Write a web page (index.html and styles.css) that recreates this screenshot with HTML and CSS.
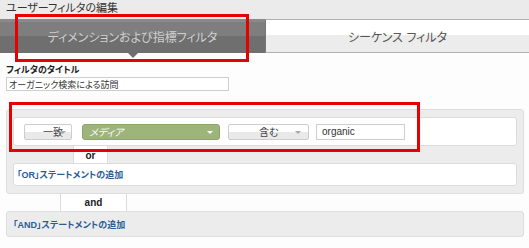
FILE: index.html
```html
<!DOCTYPE html>
<html lang="ja">
<head>
  <meta charset="UTF-8">
  <title>ユーザーフィルタの編集</title>
  <link rel="stylesheet" href="styles.css">
</head>
<body>

<div class="dialog">
  <div class="dialog-title">ユーザーフィルタの編集</div>

  <div class="tabs">
    <div class="tab tab-active">ディメンションおよび指標フィルタ</div>
    <div class="tab">シーケンス フィルタ</div>
  </div>

  <div class="field">
    <div class="field-label">フィルタのタイトル</div>
    <div class="text-input title-input">オーガニック検索による訪問</div>
  </div>

  <div class="and-group">
    <div class="or-box condition-row">
      <div class="select select-match">一致<span class="arrow"></span></div>
      <div class="select select-green">メディア<span class="arrow"></span></div>
      <div class="select select-op">含む<span class="arrow"></span></div>
      <div class="text-input value-input">organic</div>
    </div>
    <div class="joiner joiner-or"><span class="joiner-tab">or</span></div>
    <div class="or-box add-row"><a class="add-link">「OR」ステートメントの追加</a></div>
  </div>

  <div class="joiner joiner-and"><span class="joiner-tab">and</span></div>
  <div class="add-and"><a class="add-link">「AND」ステートメントの追加</a></div>

  <!-- red annotation boxes -->
  <div class="highlight hl-tab"></div>
  <div class="highlight hl-row"></div>
</div>

</body>
</html>
```

FILE: styles.css
```css
body {
  margin: 0;
  background: #fdfdfd;
  font-family: "Liberation Sans", "Noto Sans CJK JP", sans-serif;
  font-feature-settings: "palt";
  color: #333;
}

.dialog {
  position: relative;
  width: 529px;
  height: 248px;
}

.dialog-title {
  height: 19px;
  line-height: 17px;
  padding-left: 6px;
  background: #ebebeb;
  font-size: 11px;
  color: #333;
}

.tabs {
  display: flex;
  height: 34px;
}

.tab {
  flex: 1;
  display: flex;
  align-items: center;
  justify-content: center;
  font-size: 12px;
  color: #555;
  border-top: 1px solid #b0b0b0;
  border-bottom: 1px solid #b0b0b0;
  border-left: 1px solid #777;
  background: linear-gradient(#fff 0, #fff 15px, #ececec 15px);
}

.tab-active {
  position: relative;
  flex: 0 0 265px;
  border: none;
  color: #d0d0d0;
  background: linear-gradient(#8a8a8a 0, #8a8a8a 3px, #7e7e7e 3px, #7e7e7e 17px, #6f6f6f 17px);
}

.tab-active::after {
  content: '';
  position: absolute;
  left: 128px;
  top: 34px;
  border-left: 5px solid transparent;
  border-right: 5px solid transparent;
  border-top: 5px solid #6f6f6f;
}

.field {
  padding: 12px 0 0 6px;
}

.field-label {
  font-size: 9px;
  font-weight: bold;
  line-height: 11px;
  color: #222;
}

.text-input {
  box-sizing: border-box;
  border: 1px solid #cfcfcf;
  background: #fff;
  font-size: 9px;
  color: #333;
  display: flex;
  align-items: center;
}

.title-input {
  width: 223px;
  height: 14px;
  margin-top: 1px;
  padding-left: 2px;
}

.and-group {
  margin: 18px 5px 0 6px;
  padding: 7px 6px 7px 6px;
  border: 1px solid #dedede;
  border-radius: 3px;
  background: #ececec;
}

.or-box {
  box-sizing: border-box;
  background: #fff;
  border: 1px solid #dcdcdc;
  border-radius: 3px;
}

.condition-row {
  height: 29px;
  display: flex;
  align-items: center;
  padding-left: 10px;
}

.select {
  box-sizing: border-box;
  position: relative;
  height: 16px;
  display: flex;
  align-items: center;
  font-size: 10px;
  color: #444;
  border: 1px solid #cdcdcd;
  border-radius: 2px;
  background: linear-gradient(#fff 0, #fff 7px, #e9e9e9 7px);
}

.arrow {
  position: absolute;
  top: 6px;
  border-left: 3px solid transparent;
  border-right: 3px solid transparent;
  border-top: 3px solid #aaa;
}

.select-match {
  width: 48px;
  padding-left: 18px;
}

.select-match .arrow {
  right: 5px;
}

.select-green {
  width: 138px;
  margin-left: 10px;
  padding-left: 6px;
  color: #fff;
  font-style: italic;
  border-color: #8ba568;
  border-radius: 3px;
  background: #9db57a;
}

.select-green .arrow {
  right: 6px;
  border-top-color: #fff;
}

.select-op {
  width: 81px;
  margin-left: 8px;
  padding-left: 30px;
}

.select-op .arrow {
  right: 7px;
}

.value-input {
  width: 89px;
  height: 16px;
  margin-left: 7px;
  padding-left: 5px;
  font-size: 10px;
}

.joiner {
  height: 17px;
  display: flex;
}

.joiner-tab {
  display: flex;
  align-items: center;
  justify-content: center;
  box-sizing: border-box;
  border-left: 1px solid #dcdcdc;
  border-right: 1px solid #dcdcdc;
  background: #fff;
  font-size: 10px;
  font-weight: bold;
  color: #222;
}

.joiner-or .joiner-tab {
  margin-left: 60px;
  width: 35px;
  padding-top: 1px;
}

.joiner-and .joiner-tab {
  margin-left: 60px;
  width: 67px;
}

.add-row {
  height: 23px;
  display: flex;
  align-items: center;
  padding-left: 3px;
}

.add-link {
  font-size: 9px;
  font-weight: bold;
  color: #2a5d96;
}

.add-and {
  box-sizing: border-box;
  height: 26px;
  margin: 0 5px 0 6px;
  padding-left: 6px;
  display: flex;
  align-items: center;
  border: 1px solid #dedede;
  border-radius: 3px;
  background: #ececec;
}

.highlight {
  position: absolute;
  box-sizing: border-box;
  border: 3px solid #e60000;
}

.hl-tab {
  left: 15px;
  top: 14px;
  width: 234px;
  height: 48px;
}

.hl-row {
  left: 9px;
  top: 102px;
  width: 411px;
  height: 50px;
}
```
